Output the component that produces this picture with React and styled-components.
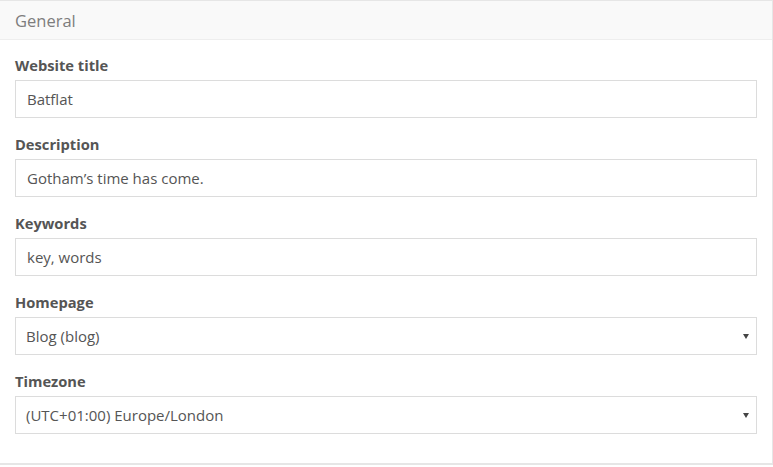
import React from "react"
import styled, { createGlobalStyle } from "styled-components"

const GlobalStyle = createGlobalStyle`
    html, body {
        margin: 0;
        padding: 0;
        background: #fff;
    }
    body {
        font-family: "Open Sans", "Liberation Sans", sans-serif;
        color: #555;
    }
`

const Panel = styled.section`
    width: 773px;
    box-sizing: border-box;
    border: 1px solid #e6e6e6;
    border-left: none;
    border-bottom-width: 2px;
    background: #fff;
`

const Heading = styled.div`
    height: 38px;
    display: flex;
    align-items: center;
    padding: 0 15px;
    background: #f9f9f9;
    border-bottom: 1px solid #eeeeee;
    font-size: 16.5px;
    color: #7d7d7d;
`

const Body = styled.div`
    display: flex;
    flex-direction: column;
    gap: 16px;
    padding: 15px 15px 29px;
`

const Group = styled.div`
    display: flex;
    flex-direction: column;
    gap: 5px;
`

const Label = styled.label`
    font-size: 14.7px;
    line-height: 20px;
    font-weight: 700;
    color: #555;
`

const Field = styled.div`
    position: relative;
    width: 742px;
`

const Input = styled.input`
    display: block;
    width: 100%;
    height: 38px;
    box-sizing: border-box;
    padding: 0 11px;
    border: 1px solid #dcdcdc;
    border-radius: 0;
    background: #fff;
    font-family: inherit;
    font-size: 15px;
    color: #555;
    outline: none;
`

const Select = styled.select`
    display: block;
    width: 100%;
    height: 38px;
    box-sizing: border-box;
    padding: 0 30px 0 10px;
    border: 1px solid #dcdcdc;
    border-radius: 0;
    background: #fff;
    font-family: inherit;
    font-size: 15px;
    color: #555;
    appearance: none;
    outline: none;
`

const Caret = styled.span`
    position: absolute;
    right: 8px;
    top: 17px;
    width: 0;
    height: 0;
    border-left: 3px solid transparent;
    border-right: 3px solid transparent;
    border-top: 5px solid #444;
    pointer-events: none;
`

const fields = [
    { label: "Website title", value: "Batflat" },
    { label: "Description", value: "Gotham\u2019s time has come." },
    { label: "Keywords", value: "key, words" },
    { label: "Homepage", value: "Blog (blog)", select: true },
    { label: "Timezone", value: "(UTC+01:00) Europe/London", select: true },
]

const App = () => {
    return (
        <>
            <GlobalStyle />
            <Panel>
                <Heading>General</Heading>
                <Body>
                    {fields.map(f => (
                        <Group key={f.label}>
                            <Label>{f.label}</Label>
                            <Field>
                                {f.select ? (
                                    <>
                                        <Select defaultValue={f.value}>
                                            <option>{f.value}</option>
                                        </Select>
                                        <Caret />
                                    </>
                                ) : (
                                    <Input defaultValue={f.value} />
                                )}
                            </Field>
                        </Group>
                    ))}
                </Body>
            </Panel>
        </>
    )
}

export default App
